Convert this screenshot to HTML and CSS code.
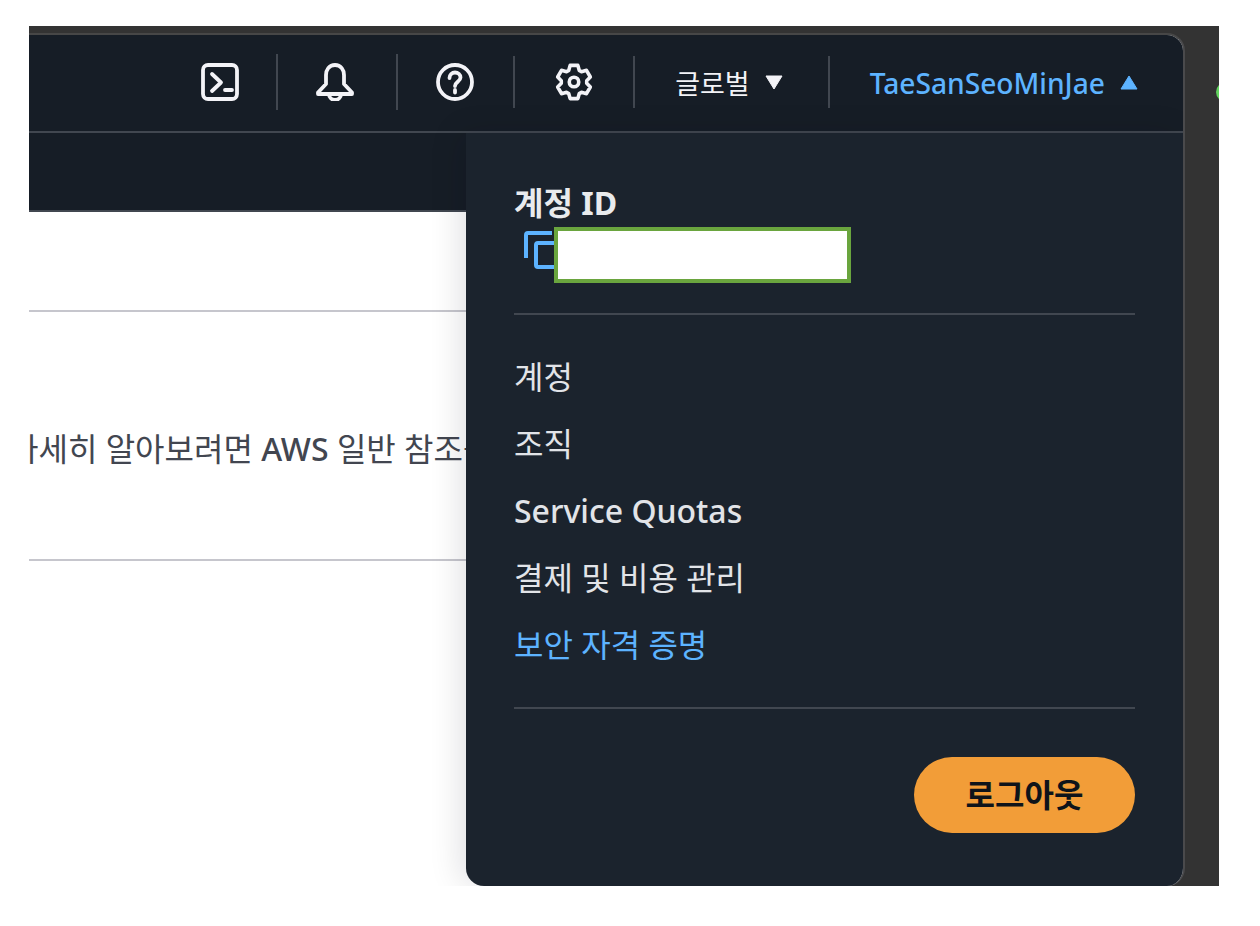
FILE: index.html
```html
<!DOCTYPE html>
<html lang="ko">
<head>
<meta charset="utf-8">
<title>AWS Console</title>
<link rel="stylesheet" href="styles.css">
</head>
<body>
<div class="window">
  <span class="traffic-dot"></span>
  <div class="app">
    <header class="topbar">
      <svg class="icon i-terminal" viewBox="0 0 38 38"><rect x="2" y="2" width="34" height="34" rx="5"/><path d="M11 11l9 8.500-9 8.500M24 27h7"/></svg>
      <span class="sep tall"></span>
      <svg class="icon i-bell" viewBox="0 0 38 38"><path d="M19 2C13 2 10 7 10 12v9l-8 8.500v1.500h34v-1.500l-8-8.500v-9C28 7 25 2 19 2zM13 31a6 6 0 0 0 12 0"/></svg>
      <span class="sep tall"></span>
      <svg class="icon i-help" viewBox="0 0 38 38"><circle cx="19" cy="19" r="17"/><path d="M13.500 15c0-3 2.500-5.500 5.500-5.500s5.500 2.300 5.500 5c0 4-5.500 4.500-5.500 8.500M19 27v2.500"/></svg>
      <span class="sep"></span>
      <svg class="icon" viewBox="-1 -1 40 40"><path d="M13.500 6.700L14.950 1.500H23.050L24.500 6.700L26.900 8.090L32.130 6.740L36.180 13.760L32.400 17.610V20.390L36.180 24.240L32.130 31.260L26.900 29.910L24.500 31.300L23.050 36.500H14.950L13.500 31.300L11.100 29.910L5.870 31.260L1.820 24.240L5.600 20.390V17.610L1.820 13.760L5.870 6.740L11.100 8.090Z"/><circle cx="19" cy="19" r="5"/></svg>
      <span class="sep"></span>
      <div class="menu-trigger region">
        <span class="region-label">글로벌</span>
        <svg class="caret" viewBox="0 0 18 15"><path d="M1 1h16l-8 13z"/></svg>
      </div>
      <span class="sep"></span>
      <div class="menu-trigger user">
        <span class="user-label">TaeSanSeoMinJae</span>
        <svg class="caret" viewBox="0 0 18 15"><path d="M1 14h16L9 1z"/></svg>
      </div>
    </header>
    <div class="subbar"></div>
    <main class="page">
      <div class="page-row first"></div>
      <div class="page-row second"><p class="page-text">자세히 알아보려면 <span class="latin">AWS</span> 일반 참조를 확인하세요.</p></div>
    </main>
    <aside class="account-menu">
      <div class="account-id">
        <h2 class="account-title">계정 ID</h2>
        <div class="account-value">
          <svg class="copy" viewBox="0 0 36 38"><path d="M2 27V4a2 2 0 0 1 2-2h24"/><rect x="12" y="12" width="22" height="24" rx="2"/></svg>
          <div class="redaction"></div>
        </div>
      </div>
      <nav class="account-links">
        <a>계정</a>
        <a>조직</a>
        <a class="latin">Service Quotas</a>
        <a>결제 및 비용 관리</a>
        <a class="active">보안 자격 증명</a>
      </nav>
      <div class="account-actions">
        <button class="signout">로그아웃</button>
      </div>
    </aside>
  </div>
</div>
</body>
</html>
```
FILE: styles.css
```css
* { box-sizing: border-box; }
html, body { margin: 0; height: 926px; background: #fff; overflow: hidden; }
body { font-family: "Noto Sans", "Noto Sans CJK KR", sans-serif; }

.window {
  position: relative;
  margin: 26px 41px 0 29px;
  height: 860px;
  padding: 7px 34px 0 0;
  background: #333333;
  overflow: hidden;
}
.traffic-dot {
  position: absolute;
  top: 56px;
  right: -17px;
  width: 20px;
  height: 20px;
  border-radius: 50%;
  background: #62d45f;
}
.app {
  position: relative;
  height: 853px;
  border-top: 2px solid #474747;
  border-right: 2px solid #4a4a4c;
  border-radius: 0 18px 18px 0;
  background: #fff;
  overflow: hidden;
}
.topbar {
  display: flex;
  align-items: center;
  justify-content: flex-end;
  gap: 40px;
  height: 98px;
  padding: 0 45px 2px 0;
  background: #161d26;
  border-bottom: 2px solid #414750;
}
.icon {
  width: 38px;
  height: 38px;
  fill: none;
  stroke: #f3f3f7;
  stroke-width: 3.800;
  stroke-linecap: round;
  stroke-linejoin: round;
}
.i-terminal { margin-right: -3px; }
.i-bell { margin: 0 2px 0 -2px; }
.i-help { margin: 0 -1px 0 -2px; }
.sep { width: 2px; height: 52px; background: #414750; }
.sep.tall { height: 56px; }
.menu-trigger {
  display: flex;
  align-items: center;
  gap: 15px;
  line-height: 32px;
}
.region { color: #f3f3f7; padding-right: 5px; font-size: 27px; }
.region-label { padding-top: 3px; }
.user { color: #5db3ff; font-size: 28.150px; font-weight: 500; }
.user-label { padding-top: 2px; }
.caret { width: 18px; height: 15px; fill: currentColor; stroke: currentColor; stroke-linejoin: round; }
.subbar { height: 79px; background: #161d26; border-bottom: 2px solid #414750; }
.page { background: #fff; }
.page-row { border-bottom: 2px solid #c6c6cd; }
.page-row.first { height: 100px; }
.page-row.second { height: 249px; padding-top: 117px; }
.page-text {
  margin: 0 0 0 -20px;
  font-size: 32px;
  line-height: 40px;
  color: #424650;
  white-space: nowrap;
}
.latin { font-weight: 500; }
.account-menu {
  position: absolute;
  top: 98px;
  right: 0;
  bottom: 0;
  width: 717px;
  padding: 52px 48px 0;
  background: #1b232d;
  border-bottom-left-radius: 18px;
  box-shadow: -6px 0 32px rgba(0, 7, 22, .12);
}
.account-id { border-bottom: 2px solid #414750; height: 130px; }
.account-title {
  margin: 0;
  font-size: 32px;
  line-height: 36px;
  font-weight: 700;
  color: #e9ebed;
}
.account-value { position: relative; padding-left: 10px; padding-top: 10px; }
.copy { display: block; width: 36px; height: 38px; fill: none; stroke: #5db3ff; stroke-width: 4; }
.redaction {
  position: absolute;
  top: 6px;
  left: 40px;
  width: 297px;
  height: 56px;
  background: #fff;
  border: 4px solid #6aa53e;
}
.account-links {
  display: flex;
  flex-direction: column;
  gap: 27px;
  height: 394px;
  padding-top: 42px;
  border-bottom: 2px solid #414750;
}
.account-links a { font-size: 32px; line-height: 40px; color: #e2e4e8; }
.account-links a.latin { font-weight: 500; }
.account-links a.active { color: #5db3ff; }
.account-actions { display: flex; justify-content: flex-end; padding-top: 48px; }
.signout {
  width: 221px;
  height: 76px;
  border: 0;
  border-radius: 38px;
  background: #f29d38;
  color: #0f141a;
  font: 700 32px/40px "Noto Sans", "Noto Sans CJK KR", sans-serif;
}
```
